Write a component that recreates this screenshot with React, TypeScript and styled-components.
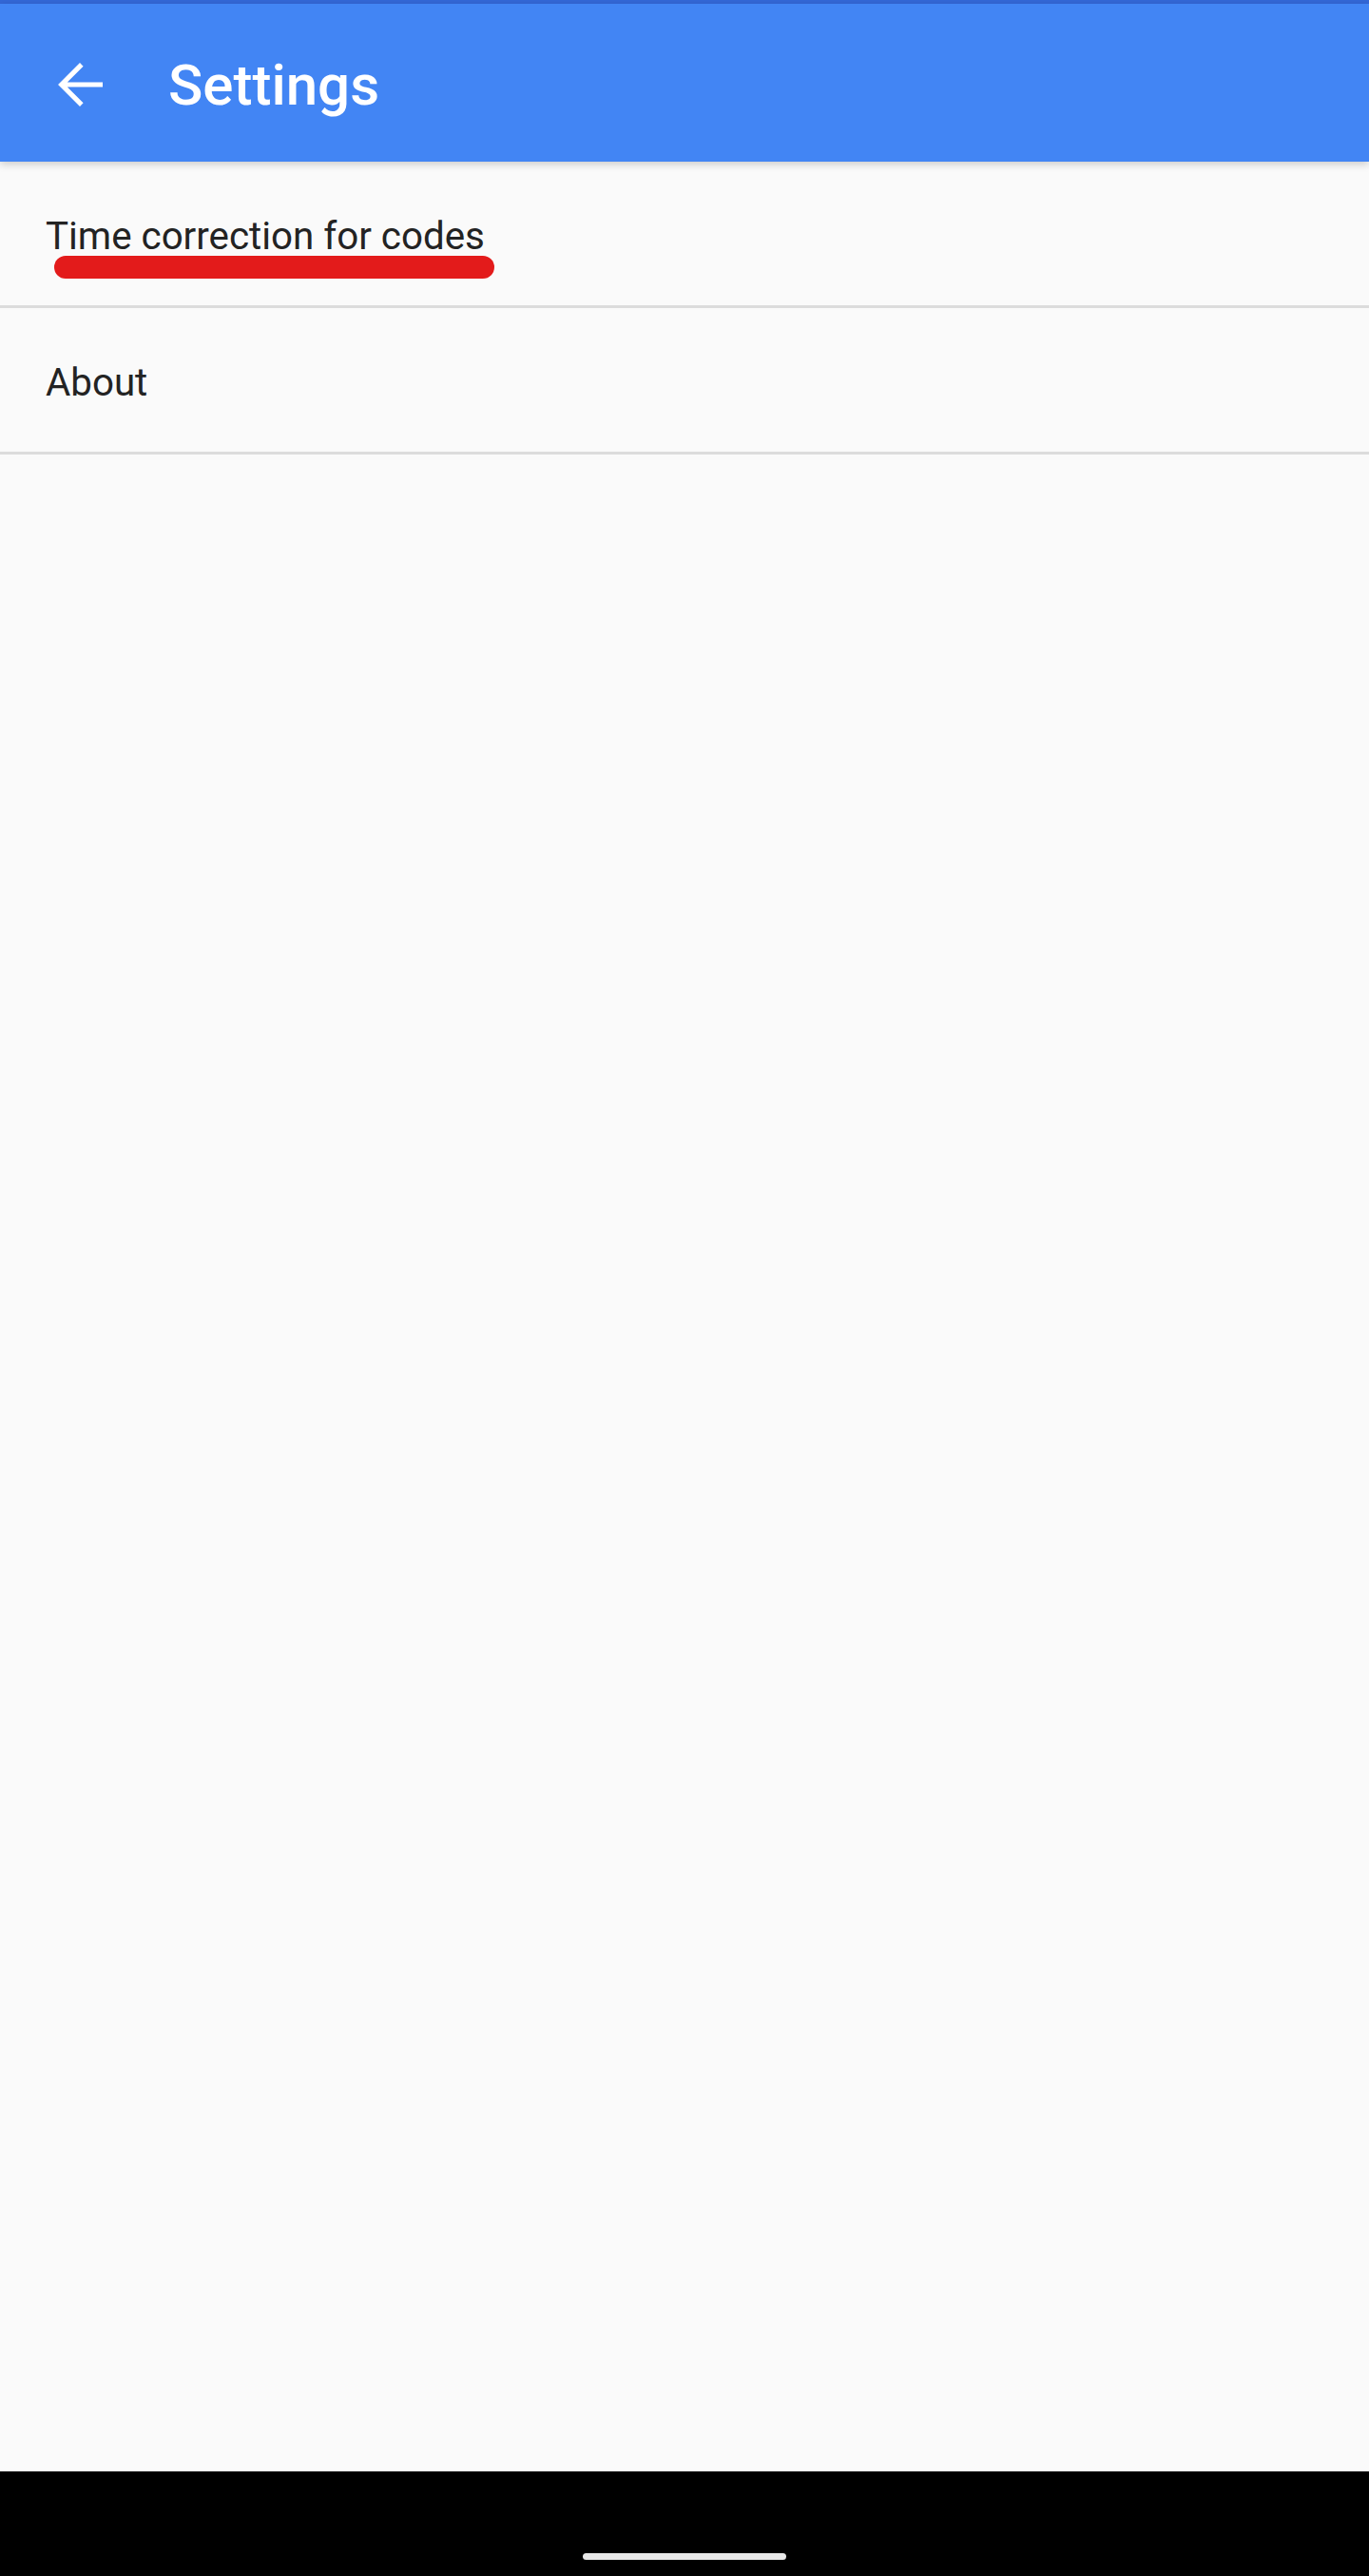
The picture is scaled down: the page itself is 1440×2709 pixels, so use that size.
import { createGlobalStyle, styled } from "styled-components";

const GlobalStyle = createGlobalStyle`
  html, body {
    margin: 0;
    padding: 0;
    background: #fafafa;
  }
  body {
    font-family: Roboto, "Liberation Sans", sans-serif;
  }
`;

type Item = {
  label: string;
  marked?: boolean;
};

const items: Item[] = [
  { label: "Time correction for codes", marked: true },
  { label: "About" },
];

const BackArrow = () => (
  <svg width="72" height="72" viewBox="0 0 24 24" fill="#fff">
    <path d="M20 11.15H7.6l5.6-5.6L12 4.35 4.35 12 12 19.65l1.2-1.2-5.6-5.6H20v-1.7z" />
  </svg>
);

const App = () => {
  return (
    <Screen>
      <GlobalStyle />
      <StatusStrip />
      <Toolbar>
        <BackButton aria-label="back">
          <BackArrow />
        </BackButton>
        <Title>Settings</Title>
      </Toolbar>
      <List>
        {items.map((item) => (
          <Row key={item.label}>
            <RowLabel>{item.label}</RowLabel>
            {item.marked && <Scribble />}
          </Row>
        ))}
      </List>
      <NavBar>
        <HomePill />
      </NavBar>
    </Screen>
  );
};
export default App;

const Screen = styled.div`
  min-height: 2709px;
  display: flex;
  flex-direction: column;
  background: #fafafa;
`;

const StatusStrip = styled.div`
  height: 4px;
  background: #3367d6;
`;

const Toolbar = styled.header`
  height: 166px;
  display: flex;
  align-items: center;
  padding-top: 3px;
  box-sizing: border-box;
  background: #4285f4;
  box-shadow: 0 3px 8px rgba(0, 0, 0, 0.18);
  position: relative;
  z-index: 2;
`;

const BackButton = styled.button`
  width: 72px;
  height: 72px;
  margin-left: 48px;
  padding: 0;
  border: none;
  background: none;
  display: flex;
  align-items: center;
  justify-content: center;
  cursor: pointer;
`;

const Title = styled.h1`
  margin: 3px 0 0 57px;
  color: #fff;
  font-family: Roboto, "Liberation Sans", sans-serif;
  font-size: 60px;
  font-weight: 500;
  line-height: 1;
`;

const List = styled.main`
  flex: 1;
  display: flex;
  flex-direction: column;
`;

const Row = styled.div`
  position: relative;
  height: 151px;
  display: flex;
  align-items: center;
  padding-left: 48px;
  border-bottom: 3px solid #dcdcdc;
`;

const RowLabel = styled.span`
  color: #232323;
  font-family: Roboto, "Liberation Sans", sans-serif;
  font-size: 40.3px;
  font-weight: 400;
  line-height: 1;
  padding-top: 7px;
`;

const Scribble = styled.span`
  position: absolute;
  left: 57px;
  top: 99px;
  width: 463px;
  height: 24px;
  border-radius: 12px;
  background: #e31b1b;
`;

const NavBar = styled.footer`
  height: 110px;
  background: #000;
  display: flex;
  justify-content: center;
  align-items: flex-end;
  padding-bottom: 17px;
  box-sizing: border-box;
`;

const HomePill = styled.div`
  width: 214px;
  height: 7px;
  border-radius: 4px;
  background: #e8e8e8;
`;
